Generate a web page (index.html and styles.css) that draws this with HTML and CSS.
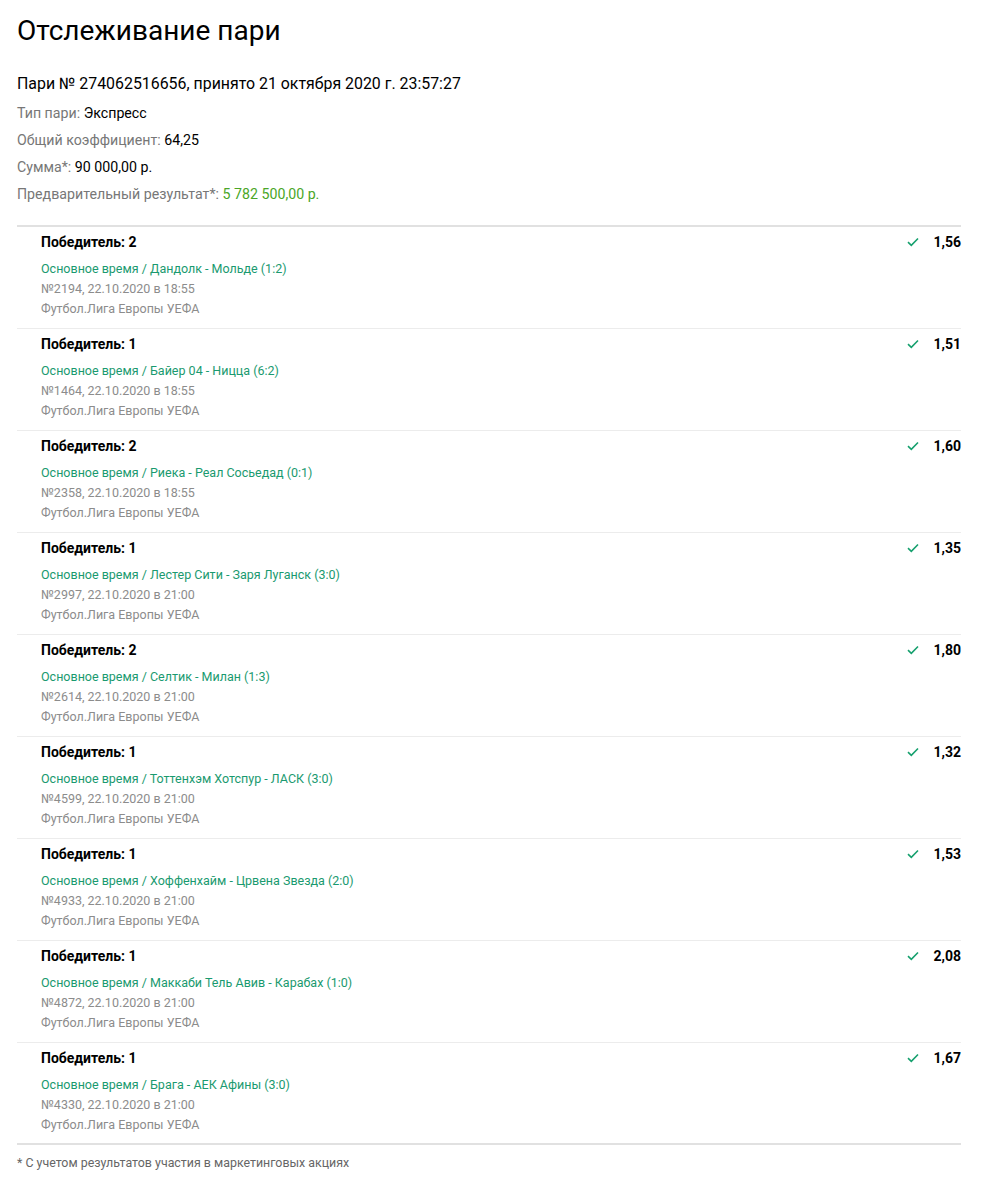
FILE: index.html
```html
<!DOCTYPE html>
<html lang="ru">
<head>
<meta charset="utf-8">
<title>Отслеживание пари</title>
<link rel="stylesheet" href="styles.css">
</head>
<body>
<div class="page">
  <h1 class="title">Отслеживание пари</h1>
  <div class="bet-head">Пари № 274062516656, принято 21 октября 2020 г. 23:57:27</div>
  <div class="info">
    <div class="info-row"><span class="label">Тип пари:</span> <span class="value">Экспресс</span></div>
    <div class="info-row"><span class="label">Общий коэффициент:</span> <span class="value">64,25</span></div>
    <div class="info-row"><span class="label">Сумма*:</span> <span class="value">90 000,00 р.</span></div>
    <div class="info-row"><span class="label">Предварительный результат*:</span> <span class="value win">5 782 500,00 р.</span></div>
  </div>

  <div class="list">
    <div class="item">
      <div class="item-main">
        <div class="outcome">Победитель: 2</div>
        <div class="event">Основное время / Дандолк - Мольде (1:2)</div>
        <div class="meta">№2194, 22.10.2020 в 18:55</div>
        <div class="meta">Футбол.Лига Европы УЕФА</div>
      </div>
      <div class="item-side"><svg class="check" viewBox="0 0 12 10" width="12" height="10"><path d="M1 5.2 L4.3 8.3 L11 1.5" fill="none" stroke="#16a06e" stroke-width="1.6"/></svg><span class="coef">1,56</span></div>
    </div>
    <div class="item">
      <div class="item-main">
        <div class="outcome">Победитель: 1</div>
        <div class="event">Основное время / Байер 04 - Ницца (6:2)</div>
        <div class="meta">№1464, 22.10.2020 в 18:55</div>
        <div class="meta">Футбол.Лига Европы УЕФА</div>
      </div>
      <div class="item-side"><svg class="check" viewBox="0 0 12 10" width="12" height="10"><path d="M1 5.2 L4.3 8.3 L11 1.5" fill="none" stroke="#16a06e" stroke-width="1.6"/></svg><span class="coef">1,51</span></div>
    </div>
    <div class="item">
      <div class="item-main">
        <div class="outcome">Победитель: 2</div>
        <div class="event">Основное время / Риека - Реал Сосьедад (0:1)</div>
        <div class="meta">№2358, 22.10.2020 в 18:55</div>
        <div class="meta">Футбол.Лига Европы УЕФА</div>
      </div>
      <div class="item-side"><svg class="check" viewBox="0 0 12 10" width="12" height="10"><path d="M1 5.2 L4.3 8.3 L11 1.5" fill="none" stroke="#16a06e" stroke-width="1.6"/></svg><span class="coef">1,60</span></div>
    </div>
    <div class="item">
      <div class="item-main">
        <div class="outcome">Победитель: 1</div>
        <div class="event">Основное время / Лестер Сити - Заря Луганск (3:0)</div>
        <div class="meta">№2997, 22.10.2020 в 21:00</div>
        <div class="meta">Футбол.Лига Европы УЕФА</div>
      </div>
      <div class="item-side"><svg class="check" viewBox="0 0 12 10" width="12" height="10"><path d="M1 5.2 L4.3 8.3 L11 1.5" fill="none" stroke="#16a06e" stroke-width="1.6"/></svg><span class="coef">1,35</span></div>
    </div>
    <div class="item">
      <div class="item-main">
        <div class="outcome">Победитель: 2</div>
        <div class="event">Основное время / Селтик - Милан (1:3)</div>
        <div class="meta">№2614, 22.10.2020 в 21:00</div>
        <div class="meta">Футбол.Лига Европы УЕФА</div>
      </div>
      <div class="item-side"><svg class="check" viewBox="0 0 12 10" width="12" height="10"><path d="M1 5.2 L4.3 8.3 L11 1.5" fill="none" stroke="#16a06e" stroke-width="1.6"/></svg><span class="coef">1,80</span></div>
    </div>
    <div class="item">
      <div class="item-main">
        <div class="outcome">Победитель: 1</div>
        <div class="event">Основное время / Тоттенхэм Хотспур - ЛАСК (3:0)</div>
        <div class="meta">№4599, 22.10.2020 в 21:00</div>
        <div class="meta">Футбол.Лига Европы УЕФА</div>
      </div>
      <div class="item-side"><svg class="check" viewBox="0 0 12 10" width="12" height="10"><path d="M1 5.2 L4.3 8.3 L11 1.5" fill="none" stroke="#16a06e" stroke-width="1.6"/></svg><span class="coef">1,32</span></div>
    </div>
    <div class="item">
      <div class="item-main">
        <div class="outcome">Победитель: 1</div>
        <div class="event">Основное время / Хоффенхайм - Црвена Звезда (2:0)</div>
        <div class="meta">№4933, 22.10.2020 в 21:00</div>
        <div class="meta">Футбол.Лига Европы УЕФА</div>
      </div>
      <div class="item-side"><svg class="check" viewBox="0 0 12 10" width="12" height="10"><path d="M1 5.2 L4.3 8.3 L11 1.5" fill="none" stroke="#16a06e" stroke-width="1.6"/></svg><span class="coef">1,53</span></div>
    </div>
    <div class="item">
      <div class="item-main">
        <div class="outcome">Победитель: 1</div>
        <div class="event">Основное время / Маккаби Тель Авив - Карабах (1:0)</div>
        <div class="meta">№4872, 22.10.2020 в 21:00</div>
        <div class="meta">Футбол.Лига Европы УЕФА</div>
      </div>
      <div class="item-side"><svg class="check" viewBox="0 0 12 10" width="12" height="10"><path d="M1 5.2 L4.3 8.3 L11 1.5" fill="none" stroke="#16a06e" stroke-width="1.6"/></svg><span class="coef">2,08</span></div>
    </div>
    <div class="item">
      <div class="item-main">
        <div class="outcome">Победитель: 1</div>
        <div class="event">Основное время / Брага - АЕК Афины (3:0)</div>
        <div class="meta">№4330, 22.10.2020 в 21:00</div>
        <div class="meta">Футбол.Лига Европы УЕФА</div>
      </div>
      <div class="item-side"><svg class="check" viewBox="0 0 12 10" width="12" height="10"><path d="M1 5.2 L4.3 8.3 L11 1.5" fill="none" stroke="#16a06e" stroke-width="1.6"/></svg><span class="coef">1,67</span></div>
    </div>
  </div>

  <div class="footnote">* С учетом результатов участия в маркетинговых акциях</div>
</div>
</body>
</html>
```

FILE: styles.css
```css
* { box-sizing: border-box; }
html, body { margin: 0; padding: 0; background: #fff; }
body { font-family: Roboto, "Noto Sans", Arial, sans-serif; color: #000; }

.page {
  width: 944px;
  margin-left: 17px;
  padding-top: 13px;
}

.title {
  margin: 0;
  font-size: 28px;
  font-weight: 400;
  line-height: 36px;
  color: #000;
}

.bet-head {
  margin-top: 24px;
  font-size: 15.9px;
  line-height: 22px;
  color: #000;
}

.info {
  margin-top: 5px;
  display: flex;
  flex-direction: column;
}

.info-row {
  font-size: 14.2px;
  line-height: 27px;
}

.label { color: #777; }
.value { color: #000; }
.value.win { color: #4aa627; }

.list {
  margin-top: 17px;
  border-top: 2px solid #e1e1e1;
  border-bottom: 2px solid #e1e1e1;
}

.item {
  display: flex;
  justify-content: space-between;
  padding: 5px 0 9px 24px;
  border-top: 1px solid #ececec;
}
.item:first-child { border-top: 0; }
.item:last-child { padding-bottom: 8px; }

.item-main { display: flex; flex-direction: column; }

.outcome {
  font-size: 14px;
  font-weight: 700;
  line-height: 20px;
  margin-bottom: 7px;
}

.event {
  font-size: 12.5px;
  line-height: 20px;
  color: #1a9a6f;
}

.meta {
  font-size: 12.5px;
  line-height: 20px;
  color: #8c8c8c;
}

.item-side {
  display: flex;
  align-items: center;
  height: 20px;
  gap: 14px;
}

.check { display: block; }

.coef {
  font-size: 14px;
  font-weight: 700;
  line-height: 20px;
}

.footnote {
  margin-top: 10px;
  font-size: 12.4px;
  line-height: 16px;
  color: #666;
}
```
